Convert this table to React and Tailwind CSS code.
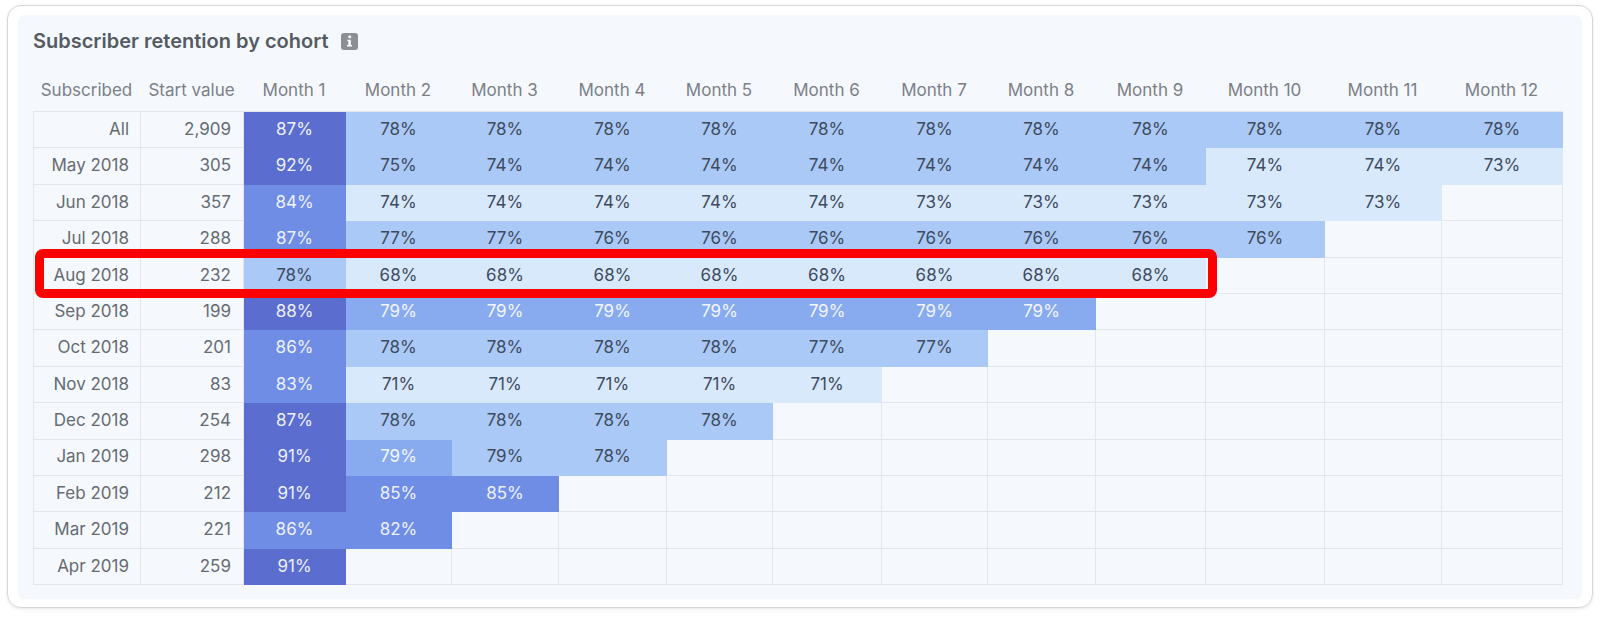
import React from "react";

const STYLES = {
  D: "bg-[#5b6dcf] border-[#5b6dcf] text-[#eef2ff]",
  M: "bg-[#6f8de5] border-[#6f8de5] text-[#eef2ff]",
  LM: "bg-[#88abef] border-[#88abef] text-[#f3f6ff]",
  L: "bg-[#aac9f6] border-[#aac9f6] text-[#3e4b5e]",
  X: "bg-[#d9e9fc] border-[#d9e9fc] text-[#3e4b5e]",
};

const rep = (v, t, n) => Array.from({ length: n }, () => [v, t]);

const ROWS = [
  ["All", "2,909", [["87%", "D"], ...rep("78%", "L", 11)]],
  ["May 2018", "305", [["92%", "D"], ["75%", "L"], ...rep("74%", "L", 7), ["74%", "X"], ["74%", "X"], ["73%", "X"]]],
  ["Jun 2018", "357", [["84%", "M"], ...rep("74%", "X", 5), ...rep("73%", "X", 5)]],
  ["Jul 2018", "288", [["87%", "M"], ["77%", "L"], ["77%", "L"], ...rep("76%", "L", 7)]],
  ["Aug 2018", "232", [["78%", "L"], ...rep("68%", "X", 8)]],
  ["Sep 2018", "199", [["88%", "D"], ...rep("79%", "LM", 7)]],
  ["Oct 2018", "201", [["86%", "M"], ...rep("78%", "L", 4), ["77%", "L"], ["77%", "L"]]],
  ["Nov 2018", "83", [["83%", "M"], ...rep("71%", "X", 5)]],
  ["Dec 2018", "254", [["87%", "D"], ...rep("78%", "L", 4)]],
  ["Jan 2019", "298", [["91%", "D"], ["79%", "LM"], ["79%", "L"], ["78%", "L"]]],
  ["Feb 2019", "212", [["91%", "D"], ["85%", "M"], ["85%", "M"]]],
  ["Mar 2019", "221", [["86%", "M"], ["82%", "M"]]],
  ["Apr 2019", "259", [["91%", "D"]]],
];

const HEADERS = ["Subscribed", "Start value", ...Array.from({ length: 12 }, (_, i) => `Month ${i + 1}`)];

const GRID = "grid grid-cols-[107px_103px_102px_106px_107px_108px_106px_109px_106px_108px_110px_119px_117px_121px]";

function InfoIcon() {
  return (
    <span className="inline-flex items-center justify-center w-[17px] h-[17px] rounded-[3px] bg-[#8b9097]">
      <svg width="7" height="12" viewBox="0 0 6 11">
        <circle cx="3.2" cy="1.6" r="1.4" fill="#fff" />
        <path d="M1 4.3h3.2v4.9h1.1V10.5H0.8V9.2h1.1V5.6H1z" fill="#fff" />
      </svg>
    </span>
  );
}

export default function App() {
  return (
    <div className="relative w-[1600px] h-[618px] bg-white pt-[5px] pl-[7px] font-[family-name:Inter,sans-serif]">
      <div className="w-[1586px] h-[603px] rounded-[14px] border border-[#d6d6d6] shadow-[0_1px_3px_rgba(0,0,0,0.10)] pt-[9px] pl-[10px]">
        <div className="w-[1564px] h-[584px] rounded-[6px] bg-[#f5f8fc] pl-[15px] pt-[13px]">
          <div className="flex items-center gap-[12px] h-[26px]">
            <span className="text-[20px] font-semibold text-[#555b63]">Subscriber retention by cohort</span>
            <InfoIcon />
          </div>
          <div className={`${GRID} mt-[10px] h-[47px] pt-[6px] items-center`}>
            {HEADERS.map((h) => (
              <div key={h} className="text-center text-[17px] text-[#7b8088] whitespace-nowrap">
                {h}
              </div>
            ))}
          </div>
          <div className={`${GRID} border-t border-l border-[#e3e7ed] w-[1530px]`}>
            {ROWS.map(([label, start, cells]) => (
              <React.Fragment key={label}>
                <div className="h-[36.4px] border-r border-b border-[#e3e7ed] flex items-center justify-end pr-[11px] text-[17px] text-[#666b72]">
                  {label}
                </div>
                <div className="h-[36.4px] border-r border-b border-[#e3e7ed] flex items-center justify-end pr-[12px] text-[17px] text-[#666b72]">
                  {start}
                </div>
                {Array.from({ length: 12 }, (_, i) => {
                  const c = cells[i];
                  if (!c) {
                    return <div key={i} className="h-[36.4px] border-r border-b border-[#e3e7ed] bg-[#f5f8fc]" />;
                  }
                  return (
                    <div key={i} className={`h-[36.4px] border-r border-b flex items-center justify-center text-[17px] ${STYLES[c[1]]}`}>
                      {c[0]}
                    </div>
                  );
                })}
              </React.Fragment>
            ))}
          </div>
        </div>
      </div>
      <div className="absolute left-[35px] top-[249px] w-[1182px] h-[49px] border-[9px] border-[#ff0000] rounded-[8px]" />
    </div>
  );
}
